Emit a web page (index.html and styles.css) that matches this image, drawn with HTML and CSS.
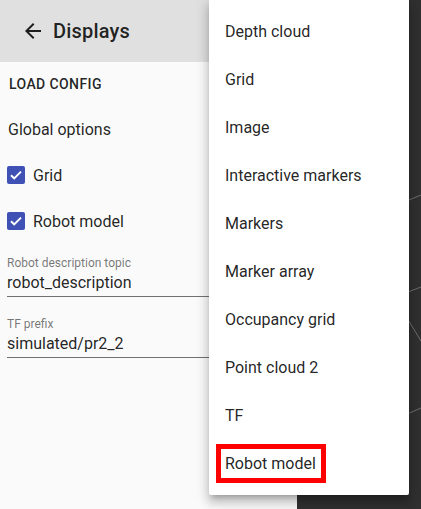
FILE: index.html
```html
<!DOCTYPE html>
<html>
<head>
<meta charset="utf-8">
<link rel="stylesheet" href="styles.css">
</head>
<body>
<div class="app">
  <aside class="panel">
    <header class="toolbar">
      <svg class="back" viewBox="0 0 24 24" width="24" height="24"><path d="M20 11H7.83l5.59-5.59L12 4l-8 8 8 8 1.41-1.41L7.83 13H20v-2z" fill="rgba(0,0,0,0.87)"/></svg>
      <span class="title">Displays</span>
    </header>
    <div class="content">
      <button class="btn">Load config</button>
      <div class="section">Global options</div>
      <label class="check"><span class="box"><svg viewBox="0 0 18 18" width="18" height="18"><path d="M4 9.2l3.2 3.2L14 5.6" fill="none" stroke="#fff" stroke-width="2"/></svg></span>Grid</label>
      <label class="check"><span class="box"><svg viewBox="0 0 18 18" width="18" height="18"><path d="M4 9.2l3.2 3.2L14 5.6" fill="none" stroke="#fff" stroke-width="2"/></svg></span>Robot model</label>
      <div class="field">
        <div class="flabel">Robot description topic</div>
        <div class="fvalue">robot_description</div>
      </div>
      <div class="field">
        <div class="flabel">TF prefix</div>
        <div class="fvalue">simulated/pr2_2</div>
      </div>
    </div>
  </aside>
  <main class="canvas">
    <svg class="grid" width="124" height="509" viewBox="0 0 124 509">
      <line x1="90" y1="209" x2="124" y2="195" />
      <line x1="90" y1="300" x2="124" y2="287" />
      <line x1="90" y1="285" x2="124" y2="341" />
      <line x1="90" y1="423" x2="124" y2="408" />
    </svg>
  </main>
  <ul class="menu">
    <li>Depth cloud</li>
    <li>Grid</li>
    <li>Image</li>
    <li>Interactive markers</li>
    <li>Markers</li>
    <li>Marker array</li>
    <li>Occupancy grid</li>
    <li>Point cloud 2</li>
    <li>TF</li>
    <li><span class="hl">Robot model</span></li>
  </ul>
</div>
</body>
</html>
```
FILE: styles.css
```css
* { box-sizing: border-box; }
html, body { margin: 0; padding: 0; }
body {
  font-family: Roboto, "Noto Sans", sans-serif;
  color: rgba(0,0,0,0.87);
  background: #fafafa;
  width: 421px;
  height: 509px;
  overflow: hidden;
}
.app {
  position: relative;
  display: flex;
  height: 509px;
}
.panel {
  width: 297px;
  background: #fafafa;
  display: flex;
  flex-direction: column;
}
.toolbar {
  height: 62px;
  background: #e0e0e0;
  display: flex;
  align-items: center;
  padding-left: 21px;
  gap: 8px;
}
.back { display: block; }
.title {
  font-size: 20px;
  font-weight: 500;
  letter-spacing: 0.2px;
}
.content {
  padding: 0 0 0 7px;
  display: flex;
  flex-direction: column;
}
.btn {
  align-self: flex-start;
  background: none;
  border: none;
  font-family: inherit;
  font-size: 14px;
  font-weight: 500;
  text-transform: uppercase;
  letter-spacing: 0.4px;
  color: rgba(0,0,0,0.87);
  padding: 0 8px 0 2px;
  height: 42px;
  margin-top: 1px;
}
.section {
  font-size: 16px;
  height: 46px;
  display: flex;
  align-items: center;
  padding-left: 1px;
  margin-top: 1px;
}
.check {
  display: flex;
  align-items: center;
  font-size: 16px;
  height: 46px;
  gap: 8px;
}
.box {
  width: 18px;
  height: 18px;
  background: #3f51b5;
  border-radius: 2px;
  display: block;
}
.box svg { display: block; }
.field {
  display: flex;
  flex-direction: column;
  border-bottom: 1px solid rgba(0,0,0,0.55);
  margin-right: -7px;
  margin-top: 12px;
}
.field + .field { margin-top: 20px; }
.flabel {
  font-size: 12px;
  color: rgba(0,0,0,0.54);
  line-height: 14px;
}
.fvalue {
  font-size: 16px;
  line-height: 20px;
  padding: 3px 0 3px;
}
.canvas {
  flex: 1;
  background: #303030;
  position: relative;
}
.grid {
  display: block;
}
.grid line {
  stroke: #6e6e6e;
  stroke-width: 1;
}
.menu {
  position: absolute;
  left: 209px;
  top: -1px;
  width: 200px;
  margin: 0;
  padding: 8px 0;
  list-style: none;
  background: #fff;
  box-shadow: 0 5px 5px -3px rgba(0,0,0,0.2), 0 8px 10px 1px rgba(0,0,0,0.14), 0 3px 14px 2px rgba(0,0,0,0.12);
  border-radius: 0 0 2px 2px;
}
.menu li {
  height: 48px;
  display: flex;
  align-items: center;
  padding-left: 16px;
  font-size: 16px;
}
.hl {
  margin-left: -9px;
  padding: 0 5px 0 4px;
  height: 39px;
  display: flex;
  align-items: center;
  border: 5px solid #ff0000;
}
```
